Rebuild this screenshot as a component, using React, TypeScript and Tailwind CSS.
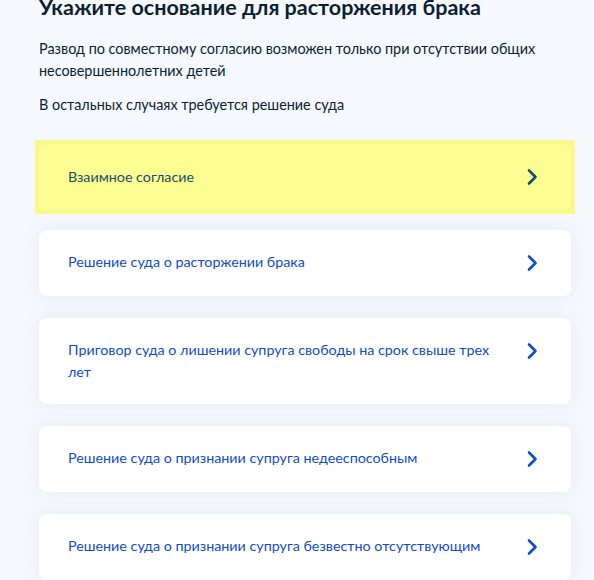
const options = [
  "Решение суда о расторжении брака",
  "Приговор суда о лишении супруга свободы на срок свыше трех лет",
  "Решение суда о признании супруга недееспособным",
  "Решение суда о признании супруга безвестно отсутствующим",
];

const Chevron = ({ color }: { color: string }) => (
  <svg width="24" height="24" viewBox="0 0 24 24" fill="none" className="shrink-0">
    <path d="M9 5.5l6.5 6.5L9 18.5" stroke={color} strokeWidth="2.6" strokeLinecap="round" strokeLinejoin="round" />
  </svg>
);

const App = () => {
  return (
    <div className="min-h-[580px] w-[594px] overflow-hidden bg-[#f5f8fc] pl-[39px] pr-[23px] font-['Lato','Liberation_Sans',sans-serif]">
      <h1 className="-mt-[7px] text-[21.5px] font-bold leading-[28px] text-[#0b1f33]">
        Укажите основание для расторжения брака
      </h1>
      <p className="mt-[17px] text-[14.4px] leading-[22px] text-[#0b1f33]">
        Развод по совместному согласию возможен только при отсутствии общих несовершеннолетних детей
      </p>
      <p className="mt-[12px] text-[14.4px] leading-[22px] text-[#0b1f33]">
        В остальных случаях требуется решение суда
      </p>

      <div className="mt-[24px] -mx-[4px] bg-[#f6f98c] p-[4px]">
        <div className="flex items-center justify-between rounded-lg bg-[#fbfe91] py-[21px] pl-[29px] pr-[27px]">
          <span className="text-[14.3px] leading-[22px] text-[#1b4b6c]">Взаимное согласие</span>
          <Chevron color="#1b4b6c" />
        </div>
      </div>

      <div className="mt-[16px] flex flex-col gap-[22px]">
        {options.map((o) => (
          <div
            key={o}
            className="flex items-start justify-between gap-4 rounded-lg bg-white py-[21px] pl-[29px] pr-[27px] shadow-[0_0_16px_rgba(90,140,200,0.10)]"
          >
            <span className="max-w-[436px] text-[14.3px] leading-[22px] text-[#0d4cd3]">{o}</span>
            <Chevron color="#0d4cd3" />
          </div>
        ))}
      </div>
    </div>
  );
};

export default App;
